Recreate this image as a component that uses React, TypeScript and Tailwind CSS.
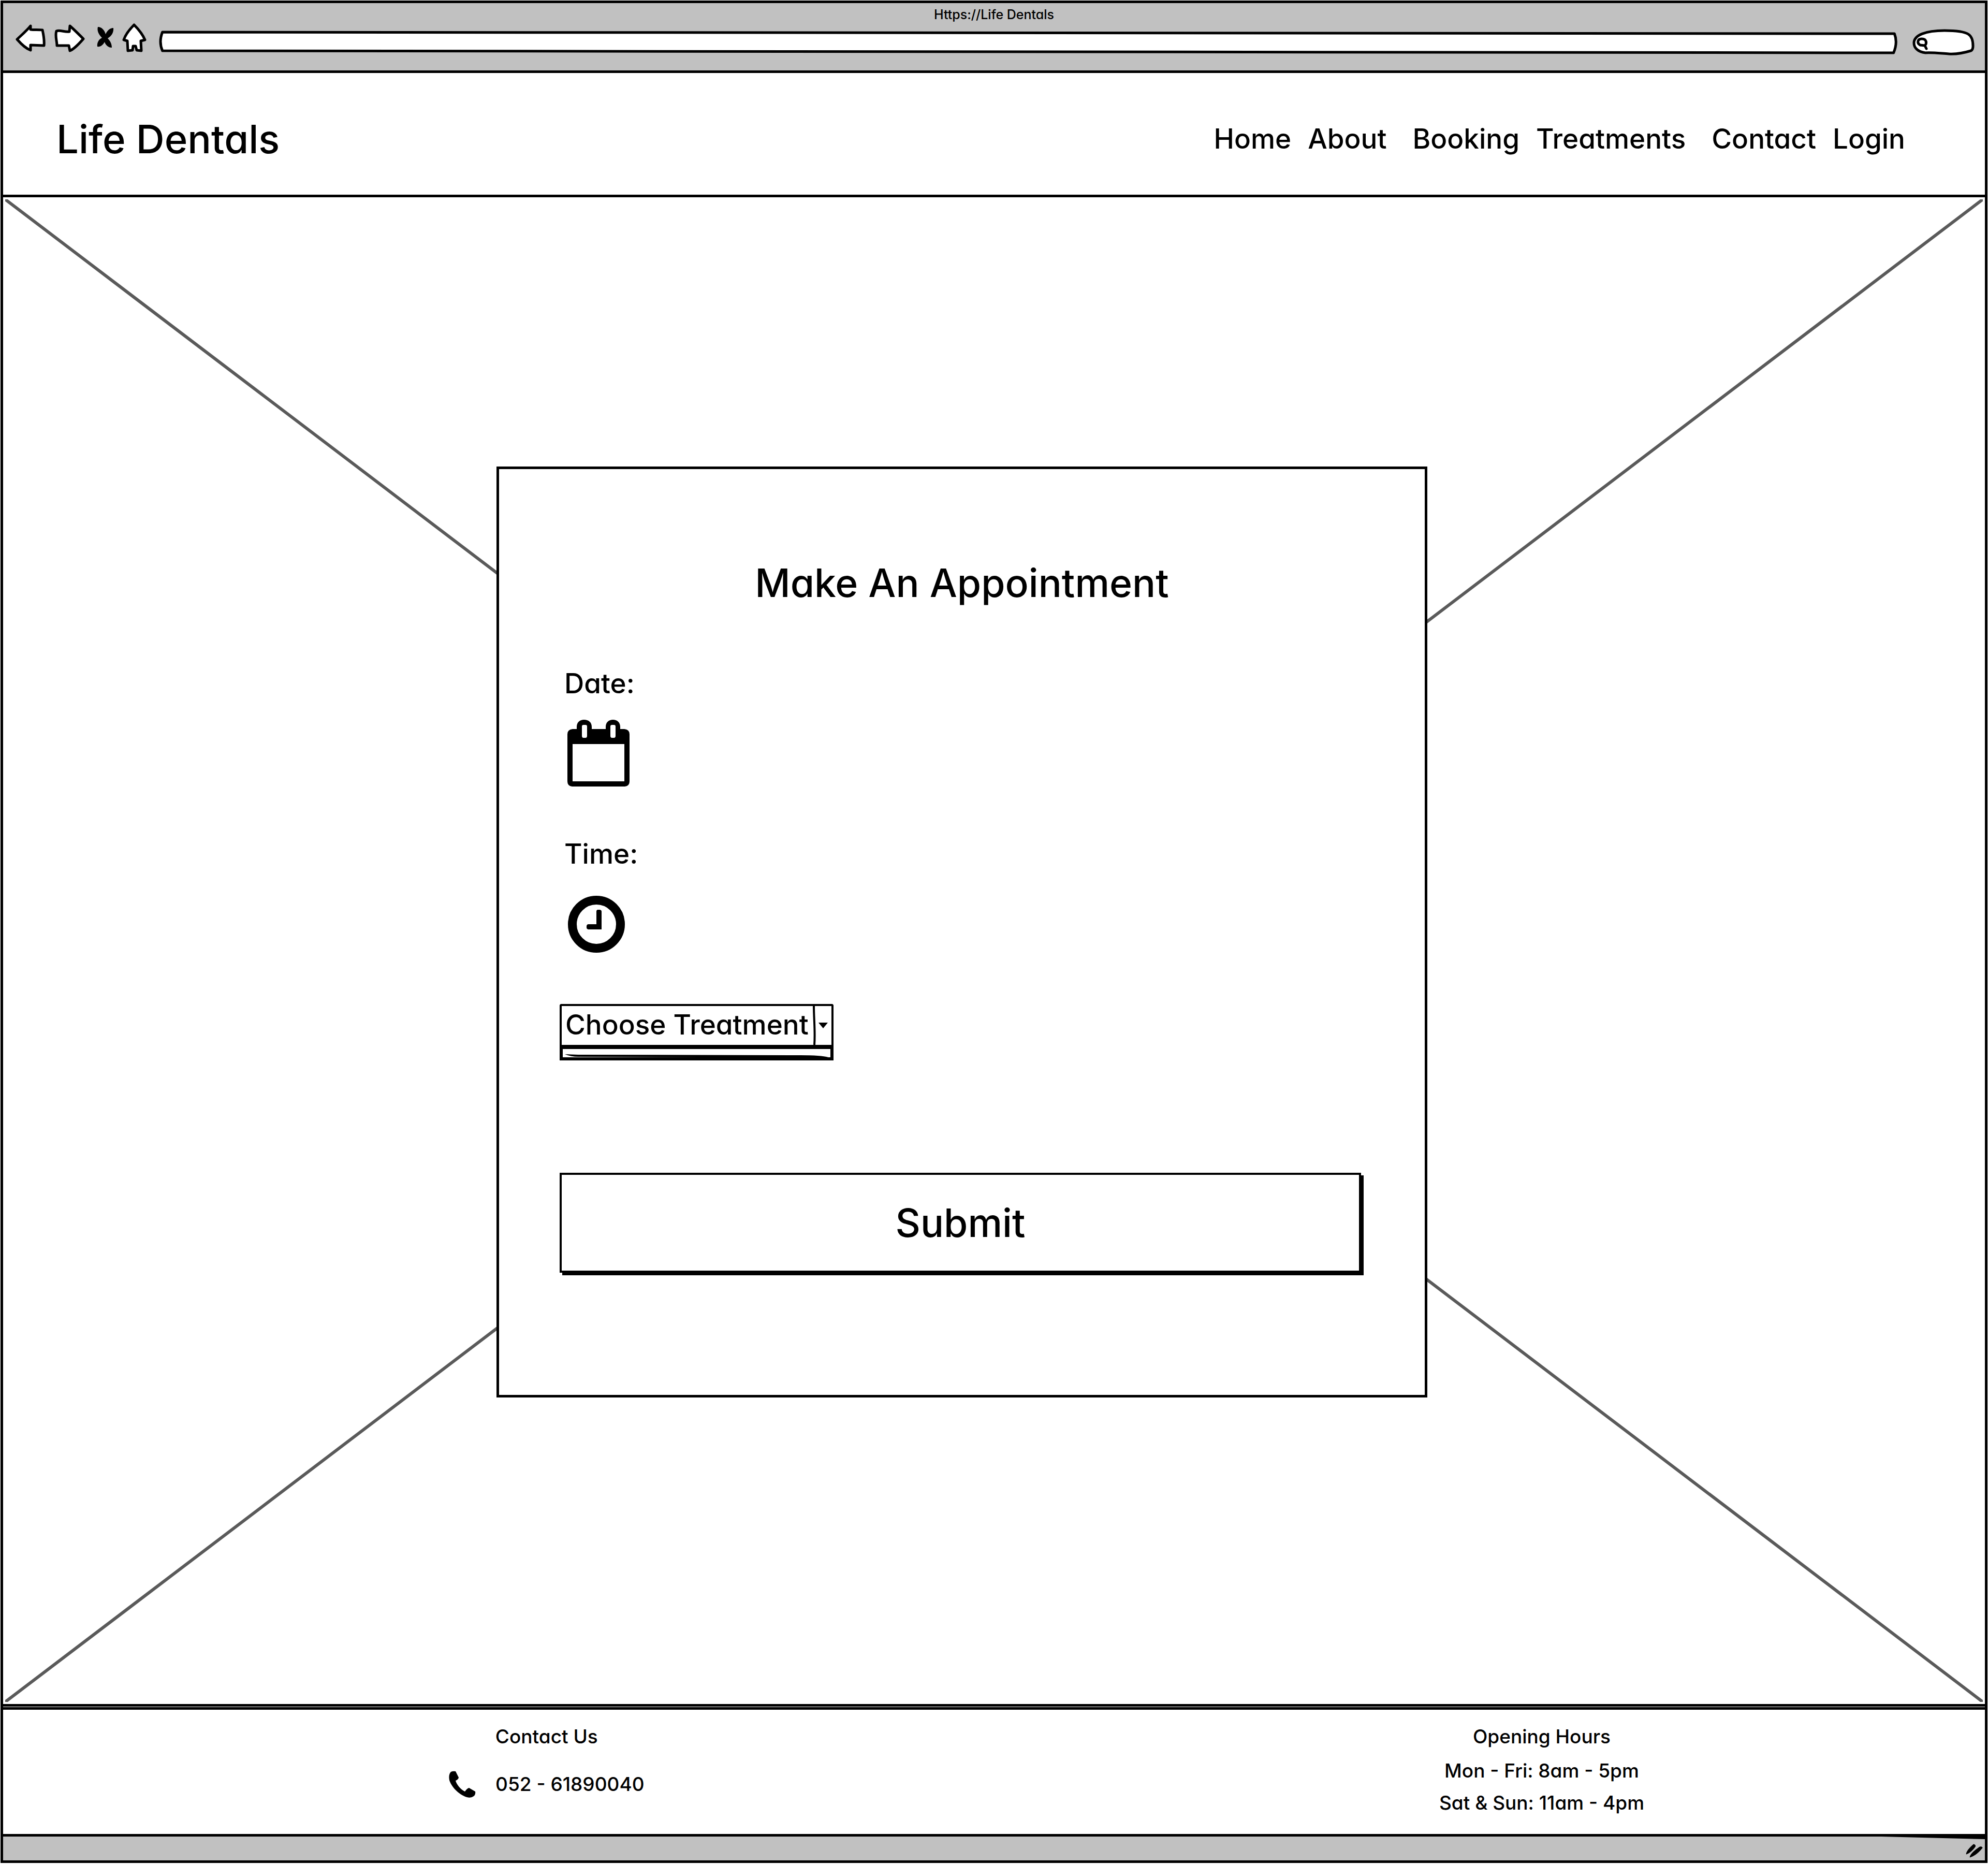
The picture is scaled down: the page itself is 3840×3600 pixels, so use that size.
import React from "react";

const navGroups = [
  ["Home", "About"],
  ["Booking", "Treatments"],
  ["Contact", "Login"],
];

function BackIcon() {
  return (
    <svg className="h-14 w-[62px]" viewBox="0 0 62 56" fill="#fff" stroke="#000" strokeWidth="5" strokeLinejoin="round" strokeLinecap="round">
      <path d="M29 5 C22 14 10 24 3 31 C10 39 21 49 29 52 L29 42 L55 43 C56 33 54 22 52 13 C44 12 36 13 29 12 Z" />
    </svg>
  );
}

function ForwardIcon() {
  return (
    <svg className="h-14 w-[62px]" viewBox="0 0 62 56" fill="#fff" stroke="#000" strokeWidth="5" strokeLinejoin="round" strokeLinecap="round">
      <path d="M31 5 C39 12 50 23 57 30 C50 38 39 50 31 53 L29 43 L6 43 C6 34 2 24 5 15 C12 12 22 18 30 16 Z" />
    </svg>
  );
}

function StopIcon() {
  return (
    <svg className="h-14 w-9" viewBox="0 0 36 56" fill="#000">
      <path d="M3 7 C11 7 16 14 18 21 C21 14 26 9 33 9 C34 18 29 25 22 29 C27 34 30 40 30 47 C23 47 18 42 16 36 C13 42 8 46 2 45 C1 37 5 31 11 28 C5 22 1 15 3 7 Z" />
    </svg>
  );
}

function HomeIcon() {
  return (
    <svg className="h-14 w-12" viewBox="0 0 48 56" fill="#fff" stroke="#000" strokeWidth="5" strokeLinejoin="round" strokeLinecap="round">
      <path d="M24 3 C16 11 8 20 4 32 L11 34 L12 53 L21 52 L22 44 L27 44 L29 52 L38 53 L37 34 L45 32 C40 20 32 11 24 3 Z" />
    </svg>
  );
}

function CalendarIcon() {
  return (
    <svg className="block h-[129px] w-[120px]" viewBox="0 0 120 129">
      <path
        fillRule="evenodd"
        d="M10 18 H18 V14 C18 5 24 0 32 0 C41 0 47 5 47 14 V18 H74 V14 C74 5 80 0 88 0 C96 0 102 5 102 14 V18 H110 Q120 19 120 28 V119 Q120 128 111 129 H9 Q0 128 0 119 V28 Q0 19 10 18 Z M10 47 V119 H110 V47 Z M31 10 Q28 10 28 13 V31 Q28 35 31 35 H35 Q38 35 38 31 V13 Q38 10 35 10 Z M86 10 Q83 10 83 13 V31 Q83 35 86 35 H90 Q93 35 93 31 V13 Q93 10 90 10 Z"
      />
    </svg>
  );
}

function ClockIcon() {
  return (
    <svg className="block h-[110px] w-[110px]" viewBox="0 0 110 110">
      <circle cx="55" cy="55" r="46.5" fill="none" stroke="#000" strokeWidth="17" />
      <path d="M57 27 H62 Q65 28 65 30 V65 H39 Q36 64 36 62 V58 Q37 55 39 55 H55 V30 Q55 28 57 27 Z" />
    </svg>
  );
}

function PhoneIcon() {
  return (
    <svg className="h-[52px] w-[52px]" viewBox="0 0 52 52">
      <path d="M4 2 Q8 0 13 1 L19 13 Q18 17 13 19 C15 27 23 36 31 40 Q35 34 39 33 L51 40 Q52 46 48 49 Q43 53 35 51 C18 46 4 29 1 18 Q-1 7 4 2 Z" />
    </svg>
  );
}

export default function App() {
  return (
    <div className="bg-white p-px font-['Inter','Lato',sans-serif] font-medium text-black [font-feature-settings:'cv11']">
      <div className="border-[5px] border-black">
        <div className="flex h-[135px] flex-col border-b-[5px] border-black bg-[#c1c1c1]">
          <p className="h-[39px] pt-[6px] text-center text-[25px] leading-8">Https://Life Dentals</p>
          <div className="flex items-start pl-6 pr-5">
            <button aria-label="Back" className="mr-[12px]"><BackIcon /></button>
            <button aria-label="Forward" className="mr-[20px]"><ForwardIcon /></button>
            <button aria-label="Stop" className="mr-[13px]"><StopIcon /></button>
            <button aria-label="Home page" className="mr-6"><HomeIcon /></button>
            <div className="relative mt-[14px] h-[46px] flex-1">
              <svg className="absolute inset-0 h-full w-full" viewBox="0 0 1000 46" preserveAspectRatio="none" fill="#fff" stroke="#000" strokeWidth="5" strokeLinejoin="round">
                <path vectorEffect="non-scaling-stroke" d="M2 3 L998 6 Q1000 23 997.5 43 L2 39 Q-0.2 22 2 3 Z" />
              </svg>
              <input aria-label="Address" className="relative h-full w-full bg-transparent px-6 text-2xl outline-none" />
            </div>
            <div className="relative ml-[28px] mt-[11px] h-[52px] w-[120px]">
              <svg className="absolute inset-0 h-full w-full" viewBox="0 0 120 52" fill="#fff" stroke="#000" strokeWidth="5" strokeLinecap="round">
                <path d="M25 46 C10 44 3 36 3 27 C3 12 25 3 62 3 C84 3 100 5 108 10 C116 15 117 27 117 33 Q117 40 113 42 C100 46 86 49 70 48 C54 47 38 45 25 46 Z" />
                <path d="M24 32 L15 31 C8 27 10 19 18 19 C28 19 28 28 24 32 L27 38" />
              </svg>
              <input aria-label="Search" className="relative h-full w-full bg-transparent pl-9 pr-3 text-2xl outline-none" />
            </div>
          </div>
        </div>

        <header className="flex h-[240px] items-center justify-between border-b-[5px] border-black pl-[103px] pr-[154px] pt-[18px]">
          <h1 className="text-[76px] leading-[96px]">Life Dentals</h1>
          <nav className="flex gap-[50px] text-[53px] leading-[64px]">
            {navGroups.map((group) => (
              <div key={group[0]} className="flex gap-8">
                {group.map((item) => (
                  <a key={item} href={"#" + item.toLowerCase()}>{item}</a>
                ))}
              </div>
            ))}
          </nav>
        </header>

        <main className="relative flex justify-center pb-[592px] pr-[124px] pt-[520px]">
          <svg className="absolute inset-0 h-full w-full p-1" viewBox="0 0 100 100" preserveAspectRatio="none" stroke="#5a5a5a" strokeWidth="6">
            <path vectorEffect="non-scaling-stroke" d="M0 0 L100 100 M100 0 L0 100" />
          </svg>
          <form
            className="relative flex w-[1798px] flex-col items-start border-[5px] border-black bg-white px-[117px] pb-[236px] pt-[172px]"
            onSubmit={(e) => e.preventDefault()}
          >
            <h2 className="self-center text-[75px] leading-[96px]">Make An Appointment</h2>

            <label htmlFor="date" className="mt-[114px] pl-[9px] text-[53px] leading-[64px]">Date:</label>
            <button id="date" type="button" className="ml-[15px] mt-[38px]"><CalendarIcon /></button>

            <label htmlFor="time" className="mt-[98px] pl-[9px] text-[53px] leading-[64px]">Time:</label>
            <button id="time" type="button" className="ml-4 mt-[49px]"><ClockIcon /></button>

            <div className="mt-[99px] w-[529px]">
              <div className="relative">
                <select aria-label="Choose Treatment" className="block h-[79px] w-full appearance-none rounded-t-sm border-4 border-b-0 border-black bg-white pb-1 pl-[7px] text-[53px] leading-[64px]">
                  <option>Choose Treatment</option>
                </select>
                <svg className="pointer-events-none absolute right-1 top-1 h-[75px] w-9" viewBox="0 0 36 75">
                  <path d="M2 0 C2 25 5 50 3 75" fill="none" stroke="#000" strokeWidth="4" />
                  <path d="M11 32 H29 L20 43 Z" />
                </svg>
              </div>
              <div className="h-[30px] border-x-[6px] border-b-[6px] border-t-8 border-black bg-white">
                <svg className="block h-4 w-full" viewBox="0 0 518 16">
                  <path d="M4 10 Q16 15 30 15 L500 17 L514 16 Q500 12 460 12 L30 11 Z" />
                </svg>
              </div>
            </div>

            <button type="submit" className="mt-[217px] h-[193px] w-[1548px] max-w-full border-4 border-black bg-white text-[75px] leading-[96px] shadow-[5px_5px_0_#000]">
              Submit
            </button>
          </form>
        </main>

        <footer className="border-y-[5px] border-black">
          <div className="mt-px flex h-[245px] items-start justify-between border-t-[5px] border-black pl-[861px] pr-[658px] text-[37px] leading-[62px]">
            <section className="flex flex-col items-center pt-[21px]">
              <h3>Contact Us</h3>
              <p className="mt-[30px] flex items-center gap-[38px]">
                <PhoneIcon />
                <a href="tel:05261890040">052 - 61890040</a>
              </p>
            </section>
            <section className="flex flex-col items-center pt-[21px]">
              <h3>Opening Hours</h3>
              <p className="mt-1">Mon - Fri: 8am - 5pm</p>
              <p>Sat &amp; Sun: 11am - 4pm</p>
            </section>
          </div>
        </footer>

        <div className="flex h-[46px] items-start justify-end bg-[#c1c1c1]">
          <svg className="h-[46px] w-[340px]" viewBox="0 0 340 46">
            <path d="M140 0 H340 V5 Z" />
            <path d="M304 34 Q305 26 318 15 Q323 16 321 20 Q313 31 304 34 Z M311 40 Q312 32 330 20 Q335 19 335 22 Q324 36 311 40 Z" stroke="#000" strokeWidth="1" />
          </svg>
        </div>
      </div>
    </div>
  );
}
